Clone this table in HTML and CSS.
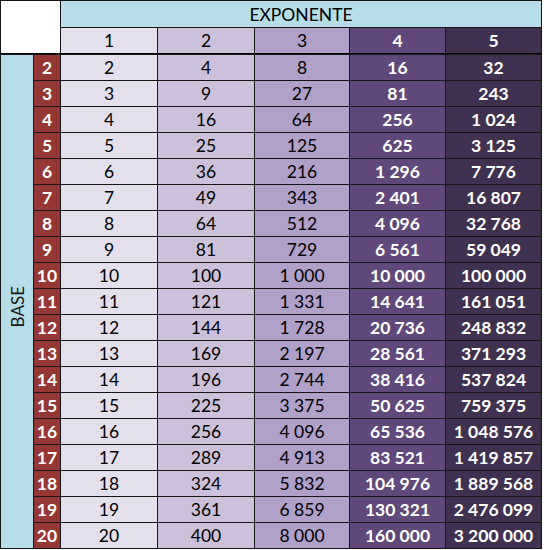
FILE: index.html
```html
<!DOCTYPE html>
<html>
<head>
<meta charset="utf-8">
<link rel="stylesheet" href="styles.css">
</head>
<body>
<div class="sheet">
  <div class="corner"></div>
  <div class="exp">EXPONENTE</div>
  <div class="hd c1">1</div>
  <div class="hd c2">2</div>
  <div class="hd c3">3</div>
  <div class="hd c4">4</div>
  <div class="hd c5">5</div>
  <div class="base"><span>BASE</span></div>

  <div class="b">2</div><div class="c1">2</div><div class="c2">4</div><div class="c3">8</div><div class="c4">16</div><div class="c5">32</div>
  <div class="b">3</div><div class="c1">3</div><div class="c2">9</div><div class="c3">27</div><div class="c4">81</div><div class="c5">243</div>
  <div class="b">4</div><div class="c1">4</div><div class="c2">16</div><div class="c3">64</div><div class="c4">256</div><div class="c5">1&nbsp;024</div>
  <div class="b">5</div><div class="c1">5</div><div class="c2">25</div><div class="c3">125</div><div class="c4">625</div><div class="c5">3&nbsp;125</div>
  <div class="b">6</div><div class="c1">6</div><div class="c2">36</div><div class="c3">216</div><div class="c4">1&nbsp;296</div><div class="c5">7&nbsp;776</div>
  <div class="b">7</div><div class="c1">7</div><div class="c2">49</div><div class="c3">343</div><div class="c4">2&nbsp;401</div><div class="c5">16&nbsp;807</div>
  <div class="b">8</div><div class="c1">8</div><div class="c2">64</div><div class="c3">512</div><div class="c4">4&nbsp;096</div><div class="c5">32&nbsp;768</div>
  <div class="b">9</div><div class="c1">9</div><div class="c2">81</div><div class="c3">729</div><div class="c4">6&nbsp;561</div><div class="c5">59&nbsp;049</div>
  <div class="b">10</div><div class="c1">10</div><div class="c2">100</div><div class="c3">1&nbsp;000</div><div class="c4">10&nbsp;000</div><div class="c5">100&nbsp;000</div>
  <div class="b">11</div><div class="c1">11</div><div class="c2">121</div><div class="c3">1&nbsp;331</div><div class="c4">14&nbsp;641</div><div class="c5">161&nbsp;051</div>
  <div class="b">12</div><div class="c1">12</div><div class="c2">144</div><div class="c3">1&nbsp;728</div><div class="c4">20&nbsp;736</div><div class="c5">248&nbsp;832</div>
  <div class="b">13</div><div class="c1">13</div><div class="c2">169</div><div class="c3">2&nbsp;197</div><div class="c4">28&nbsp;561</div><div class="c5">371&nbsp;293</div>
  <div class="b">14</div><div class="c1">14</div><div class="c2">196</div><div class="c3">2&nbsp;744</div><div class="c4">38&nbsp;416</div><div class="c5">537&nbsp;824</div>
  <div class="b">15</div><div class="c1">15</div><div class="c2">225</div><div class="c3">3&nbsp;375</div><div class="c4">50&nbsp;625</div><div class="c5">759&nbsp;375</div>
  <div class="b">16</div><div class="c1">16</div><div class="c2">256</div><div class="c3">4&nbsp;096</div><div class="c4">65&nbsp;536</div><div class="c5">1&nbsp;048&nbsp;576</div>
  <div class="b">17</div><div class="c1">17</div><div class="c2">289</div><div class="c3">4&nbsp;913</div><div class="c4">83&nbsp;521</div><div class="c5">1&nbsp;419&nbsp;857</div>
  <div class="b">18</div><div class="c1">18</div><div class="c2">324</div><div class="c3">5&nbsp;832</div><div class="c4">104&nbsp;976</div><div class="c5">1&nbsp;889&nbsp;568</div>
  <div class="b">19</div><div class="c1">19</div><div class="c2">361</div><div class="c3">6&nbsp;859</div><div class="c4">130&nbsp;321</div><div class="c5">2&nbsp;476&nbsp;099</div>
  <div class="b">20</div><div class="c1">20</div><div class="c2">400</div><div class="c3">8&nbsp;000</div><div class="c4">160&nbsp;000</div><div class="c5">3&nbsp;200&nbsp;000</div>
</div>
</body>
</html>
```
FILE: styles.css
```css
html, body {
  margin: 0;
  padding: 0;
  background: #ffffff;
}
.sheet {
  display: grid;
  grid-template-columns: 32px 26px 96px 96px 94px 95px 95px;
  grid-template-rows: 26px 26px repeat(19, 25px);
  gap: 1px;
  padding: 1px;
  width: max-content;
  background: #161616;
  font-family: Lato, "Open Sans", sans-serif;
  font-size: 17.5px;
}
.sheet > div {
  display: flex;
  align-items: center;
  justify-content: center;
  color: #000000;
}
.corner {
  grid-column: 1 / 3;
  grid-row: 1 / 3;
  background: #ffffff;
  border-bottom: 1px solid #000000;
}
.exp {
  grid-column: 3 / 8;
  background: #b7dee8;
  color: #1a1a1a;
}
.hd {
  border-bottom: 1px solid #000000;
}
.base {
  grid-column: 1;
  grid-row: 3 / 22;
  background: #b7dee8;
}
.base span {
  writing-mode: vertical-rl;
  transform: rotate(180deg);
  font-size: 17px;
  color: #1a1a1a;
  margin-top: 10px;
}
.sheet > .b {
  grid-column: 2;
  background: #953735;
  color: #ffffff;
  font-weight: 700;
}
.c1 { background: #e4dfec; }
.c2 { background: #ccc0da; }
.c3 { background: #b1a0c7; }
.sheet > .c4 { background: #60497a; color: #ffffff; font-weight: 700; }
.sheet > .c5 { background: #403151; color: #ffffff; font-weight: 700; }
```
